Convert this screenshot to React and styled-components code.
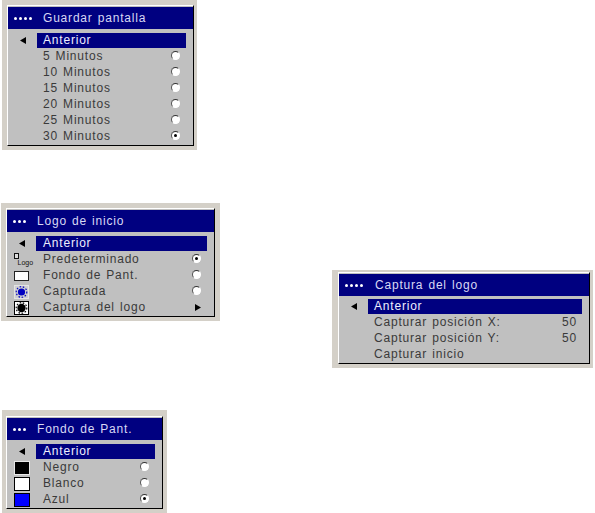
import React from 'react';
import styled, { createGlobalStyle } from 'styled-components';

const GlobalStyle = createGlobalStyle`
  html, body {
    margin: 0;
    padding: 0;
    background: #fff;
  }
`;

const Page = styled.div`
  display: grid;
  grid-template-columns: 332px 1fr;
  width: 595px;
  height: 513px;
  overflow: hidden;
  font-family: "Liberation Sans", Arial, sans-serif;
`;

const LeftColumn = styled.div`
  display: flex;
  flex-direction: column;
  align-items: flex-start;
`;

const RightColumn = styled.div`
  padding-top: 270px;
`;

const Frame = styled.div`
  box-sizing: border-box;
  width: ${p => p.$width}px;
  margin-top: ${p => p.$top}px;
  margin-left: ${p => p.$left}px;
  padding: ${p => p.$pad};
  background: #d4d0c8;
`;

const Panel = styled.div`
  background: #c0c0c0;
  border-top: 1px solid #fff;
  border-left: 1px solid #fff;
  border-right: 1px solid #000;
  border-bottom: 1px solid #000;
  padding-top: 1px;
`;

const TitleBar = styled.div`
  display: flex;
  align-items: center;
  height: 22px;
  padding-left: 6px;
  background: #000080;
  color: #d8d8f4;
  font-size: 12px;
  letter-spacing: 0.8px;
  word-spacing: 1px;
  white-space: pre;
`;

const Dots = styled.span`
  display: flex;
  gap: 2px;
  width: ${p => p.$width}px;
`;

const Dot = styled.i`
  width: 3px;
  height: 3px;
  border-radius: 50%;
  background: #fff;
`;

const Rows = styled.div`
  display: flex;
  flex-direction: column;
  padding-top: ${p => p.$gap}px;
`;

const Row = styled.div`
  display: flex;
  align-items: flex-start;
  height: 16px;
`;

const IconCell = styled.div`
  flex: none;
  width: 29px;
  height: 15px;
  display: flex;
  align-items: center;
  justify-content: center;
`;

const BackCell = styled(IconCell)`
  padding-left: 1px;
  box-sizing: border-box;
`;

const Label = styled.div`
  flex: 1;
  display: flex;
  align-items: center;
  justify-content: space-between;
  height: 15px;
  margin-right: 7px;
  padding-left: ${p => p.$padLeft}px;
  padding-right: ${p => p.$padRight}px;
  background: ${p => (p.$selected ? '#000080' : 'transparent')};
  color: ${p => (p.$selected ? '#eeeeff' : '#3a3a3a')};
  font-size: 12px;
  letter-spacing: 0.8px;
  word-spacing: 1px;
  white-space: pre;
`;

const Text = styled.span`
  margin-bottom: 2px;
`;

const Radio = styled.span`
  position: relative;
  display: block;
  box-sizing: border-box;
  width: 9px;
  height: 9px;
  margin-bottom: 2px;
  border-radius: 50%;
  background: #fff;
  border-top: 1px solid #333;
  border-left: 1px solid #555;
  border-right: 1px solid #fff;
  border-bottom: 1px solid #fff;

  &::after {
    content: '';
    display: ${p => (p.$on ? 'block' : 'none')};
    position: absolute;
    left: 2px;
    top: 2px;
    width: 3px;
    height: 3px;
    border-radius: 50%;
    background: #000;
  }
`;

const Swatch = styled.div`
  box-sizing: border-box;
  width: 16px;
  height: 14px;
  background: ${p => p.$color};
  border: 1px solid ${p => p.$edge};
`;

const WallIcon = styled.div`
  box-sizing: border-box;
  width: 15px;
  height: 10px;
  background: #fff;
  border: 1px solid #222;
`;

const LogoMark = styled.div`
  box-sizing: border-box;
  display: flex;
  flex-direction: column;
  width: 16px;
  height: 14px;
  font-size: 7px;
  line-height: 7px;
  letter-spacing: 0;
  color: #111;
  padding-left: 4px;
`;

const LogoBox = styled.div`
  box-sizing: border-box;
  flex: none;
  width: 5px;
  height: 6px;
  margin-left: -4px;
  background: #ddd;
  border: 1px solid #111;
`;

const Back = () => (
  <svg width="7" height="7" viewBox="0 0 7 7">
    <path d="M0 3.5 L6 0 V7 Z" fill="#000" />
  </svg>
);

const Next = () => (
  <svg width="6" height="7" viewBox="0 0 6 7">
    <path d="M6 3.5 L0 0 V7 Z" fill="#000" />
  </svg>
);

const Burst = ({ color, bg, edge, core }) => (
  <svg width="15" height="14" viewBox="0 0 15 14">
    <rect x="0.5" y="0.5" width="14" height="13" fill={bg} stroke={edge} />
    <circle cx="7.5" cy="7" r={core} fill={color} />
    <circle cx="7.5" cy="7" r="5.3" fill="none" stroke={color} strokeWidth="1.2" strokeDasharray="1.6 1.6" />
  </svg>
);

const Menu = ({ width, top, left, pad, gap = 4, dots, dotsWidth, title, rows, padLeft = 6, padRight = 6 }) => (
  <Frame $width={width} $top={top} $left={left} $pad={pad}>
    <Panel>
      <TitleBar>
        <Dots $width={dotsWidth}>
          {Array.from({ length: dots }).map((_, i) => <Dot key={i} />)}
        </Dots>
        {title}
      </TitleBar>
      <Rows $gap={gap}>
        <Row>
          <BackCell><Back /></BackCell>
          <Label $selected $padLeft={padLeft} $padRight={padRight}><Text>Anterior</Text></Label>
        </Row>
        {rows.map(row => (
          <Row key={row.text}>
            <IconCell>{row.icon}</IconCell>
            <Label $padLeft={padLeft} $padRight={padRight}>
              <Text>{row.text}</Text>
              {row.radio !== undefined && <Radio $on={row.radio} />}
              {row.value && <Text>{row.value}</Text>}
              {row.next && <Next />}
            </Label>
          </Row>
        ))}
      </Rows>
    </Panel>
  </Frame>
);

const saverRows = [
  { text: '5 Minutos', radio: false },
  { text: '10 Minutos', radio: false },
  { text: '15 Minutos', radio: false },
  { text: '20 Minutos', radio: false },
  { text: '25 Minutos', radio: false },
  { text: '30 Minutos', radio: true },
];

const startRows = [
  { text: 'Predeterminado', radio: true, icon: <LogoMark><LogoBox />Logo</LogoMark> },
  { text: 'Fondo de Pant.', radio: false, icon: <WallIcon /> },
  { text: 'Capturada', radio: false, icon: <Burst color="#0000c0" bg="#d0d0d0" edge="#e4e4e4" core={3.6} /> },
  { text: 'Captura del logo', next: true, icon: <Burst color="#000" bg="#fff" edge="#000" core={4.2} /> },
];

const captureRows = [
  { text: 'Capturar posición X:', value: '50' },
  { text: 'Capturar posición Y:', value: '50' },
  { text: 'Capturar inicio' },
];

const backgroundRows = [
  { text: 'Negro', radio: false, icon: <Swatch $color="#000" $edge="#e8e8e8" /> },
  { text: 'Blanco', radio: false, icon: <Swatch $color="#fff" $edge="#000" /> },
  { text: 'Azul', radio: true, icon: <Swatch $color="#0000ff" $edge="#000" /> },
];

export default function App() {
  return (
    <Page>
      <GlobalStyle />
      <LeftColumn>
        <Menu width={195} top={0} left={2} pad="5px 3px 4px 5px" dots={4} dotsWidth={29} title="Guardar pantalla" rows={saverRows} />
        <Menu width={219} top={53} left={1} pad="5px 5px 4px 5px" dots={3} dotsWidth={24} padLeft={7} title="Logo de inicio" rows={startRows} />
        <Menu width={165} top={89} left={2} pad="6px 4px 4px 4px" dots={3} dotsWidth={24} padLeft={7} title="Fondo de Pant." rows={backgroundRows} />
      </LeftColumn>
      <RightColumn>
        <Menu width={261} top={0} left={0} pad="2px 3px 4px 6px" gap={3} dots={4} dotsWidth={30} title="Captura del logo" rows={captureRows} padRight={5} />
      </RightColumn>
    </Page>
  );
}
